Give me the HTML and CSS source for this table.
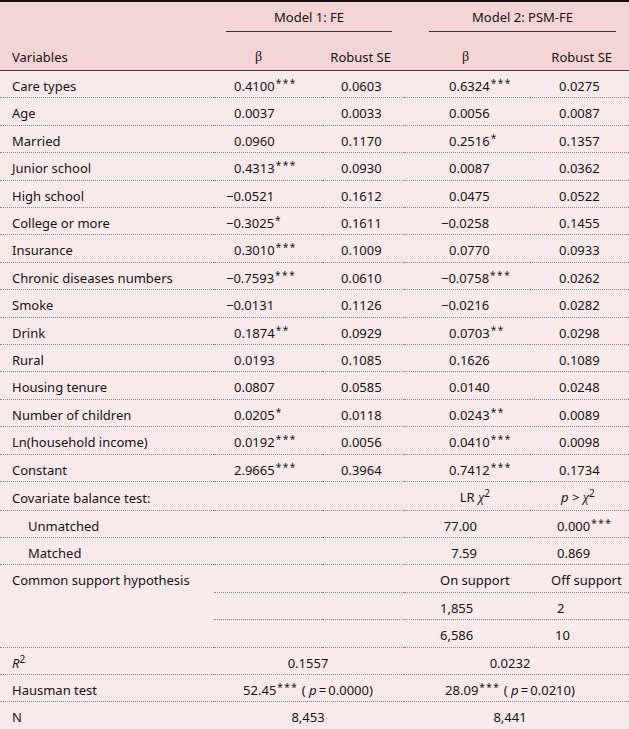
FILE: index.html
```html
<!DOCTYPE html>
<html>
<head>
<meta charset="utf-8">
<link rel="stylesheet" href="styles.css">
</head>
<body>
<table class="t">
  <colgroup>
    <col class="c1"><col class="c2"><col class="c3"><col class="c4"><col class="c5">
  </colgroup>
  <thead>
    <tr class="h1">
      <th></th>
      <th colspan="2"><div class="mh mh1">Model 1: FE</div></th>
      <th colspan="2"><div class="mh mh2">Model 2: PSM-FE</div></th>
    </tr>
    <tr class="h2">
      <th class="var">Variables</th>
      <th class="hb1"><span class="gr">β</span></th>
      <th class="hs1">Robust SE</th>
      <th class="hb2"><span class="gr">β</span></th>
      <th class="hs2">Robust SE</th>
    </tr>
  </thead>
  <tbody>
    <tr><td class="var">Care types</td><td class="b1">0.4100<sup>***</sup></td><td class="s1">0.0603</td><td class="b2">0.6324<sup>***</sup></td><td class="s2">0.0275</td></tr>
    <tr><td class="var">Age</td><td class="b1">0.0037</td><td class="s1">0.0033</td><td class="b2">0.0056</td><td class="s2">0.0087</td></tr>
    <tr><td class="var">Married</td><td class="b1">0.0960</td><td class="s1">0.1170</td><td class="b2">0.2516<sup>*</sup></td><td class="s2">0.1357</td></tr>
    <tr><td class="var">Junior school</td><td class="b1">0.4313<sup>***</sup></td><td class="s1">0.0930</td><td class="b2">0.0087</td><td class="s2">0.0362</td></tr>
    <tr><td class="var">High school</td><td class="b1 neg">−0.0521</td><td class="s1">0.1612</td><td class="b2">0.0475</td><td class="s2">0.0522</td></tr>
    <tr><td class="var">College or more</td><td class="b1 neg">−0.3025<sup>*</sup></td><td class="s1">0.1611</td><td class="b2 neg">−0.0258</td><td class="s2">0.1455</td></tr>
    <tr><td class="var">Insurance</td><td class="b1">0.3010<sup>***</sup></td><td class="s1">0.1009</td><td class="b2">0.0770</td><td class="s2">0.0933</td></tr>
    <tr><td class="var">Chronic diseases numbers</td><td class="b1 neg">−0.7593<sup>***</sup></td><td class="s1">0.0610</td><td class="b2 neg">−0.0758<sup>***</sup></td><td class="s2">0.0262</td></tr>
    <tr><td class="var">Smoke</td><td class="b1 neg">−0.0131</td><td class="s1">0.1126</td><td class="b2 neg">−0.0216</td><td class="s2">0.0282</td></tr>
    <tr><td class="var">Drink</td><td class="b1">0.1874<sup>**</sup></td><td class="s1">0.0929</td><td class="b2">0.0703<sup>**</sup></td><td class="s2">0.0298</td></tr>
    <tr><td class="var">Rural</td><td class="b1">0.0193</td><td class="s1">0.1085</td><td class="b2">0.1626</td><td class="s2">0.1089</td></tr>
    <tr><td class="var">Housing tenure</td><td class="b1">0.0807</td><td class="s1">0.0585</td><td class="b2">0.0140</td><td class="s2">0.0248</td></tr>
    <tr><td class="var">Number of children</td><td class="b1">0.0205<sup>*</sup></td><td class="s1">0.0118</td><td class="b2">0.0243<sup>**</sup></td><td class="s2">0.0089</td></tr>
    <tr><td class="var">Ln(household income)</td><td class="b1">0.0192<sup>***</sup></td><td class="s1">0.0056</td><td class="b2">0.0410<sup>***</sup></td><td class="s2">0.0098</td></tr>
    <tr><td class="var">Constant</td><td class="b1">2.9665<sup>***</sup></td><td class="s1">0.3964</td><td class="b2">0.7412<sup>***</sup></td><td class="s2">0.1734</td></tr>
    <tr><td class="var">Covariate balance test:</td><td></td><td></td><td class="lrh">LR <span class="chi">χ</span><sup class="sq">2</sup></td><td class="pxh"><i>p</i> &gt; <span class="chi">χ</span><sup class="sq">2</sup></td></tr>
    <tr><td class="var sub">Unmatched</td><td></td><td></td><td class="lr">77.00</td><td class="px">0.000<sup>***</sup></td></tr>
    <tr><td class="var sub">Matched</td><td></td><td></td><td class="lr">7.59</td><td class="px">0.869</td></tr>
    <tr><td class="var span3" rowspan="3">Common support hypothesis</td><td></td><td></td><td class="cs">On support</td><td class="off">Off support</td></tr>
    <tr><td></td><td></td><td class="cs">1,855</td><td class="off2">2</td></tr>
    <tr><td></td><td></td><td class="cs">6,586</td><td class="off3">10</td></tr>
    <tr><td class="var"><i>R</i><sup class="sq">2</sup></td><td colspan="2" class="m1c">0.1557</td><td colspan="2" class="m2c">0.0232</td></tr>
    <tr><td class="var">Hausman test</td><td colspan="2" class="m1c">52.45<sup>***</sup> ( <i>p</i>&#8201;=&#8201;0.0000)</td><td colspan="2" class="m2c">28.09<sup>***</sup> ( <i>p</i>&#8201;=&#8201;0.0210)</td></tr>
    <tr class="last"><td class="var">N</td><td colspan="2" class="m1c">8,453</td><td colspan="2" class="m2c">8,441</td></tr>
  </tbody>
</table>
</body>
</html>
```

FILE: styles.css
```css
html, body {
  margin: 0;
  padding: 0;
  background: #faeaea;
}

body {
  font-family: "Noto Sans", "Open Sans", sans-serif;
  font-size: 13px;
  color: #141414;
}

.t {
  width: 629px;
  table-layout: fixed;
  border-collapse: separate;
  border-spacing: 0;
  border-top: 2px solid #111;
  border-bottom: 2px solid #111;
}

.c1 { width: 214px; }
.c2 { width: 108px; }
.c3 { width: 82px; }
.c4 { width: 126px; }
.c5 { width: 99px; }

thead th {
  background: #f3d5d5;
  font-weight: normal;
  padding: 0;
}

.h1 th {
  padding-top: 6px;
}

.mh {
  line-height: 18px;
  padding-bottom: 5px;
  border-bottom: 1px solid #333;
  text-align: center;
}

.mh1 { margin: 0 12px; }
.mh2 { margin: 0 13px 0 25px; }

.h2 th {
  padding-top: 15px;
  padding-bottom: 4px;
  line-height: 18px;
  border-bottom: 1px solid #3a3a3a;
}

.h2 .var { text-align: left; padding-left: 12px; }
.hb1 { text-align: left; padding-left: 41px !important; }
.hs1 { text-align: right; padding-right: 13px !important; }
.hb2 { text-align: left; padding-left: 58px !important; }
.hs2 { text-align: right; padding-right: 17px !important; }

.gr, .chi {
  font-family: "Liberation Serif", "DejaVu Serif", serif;
  font-size: 14px;
}

.chi { font-style: italic; }

tbody td {
  background: #faeaea;
  padding: 6px 0 2px;
  line-height: 18.4px;
  border-bottom: 1px dotted #8c8c8c;
  white-space: nowrap;
  vertical-align: middle;
}

tbody tr.last td { border-bottom: none; }

td.var { padding-left: 12px; }
td.sub { padding-left: 28px; }
td.span3 { vertical-align: top; }

sup {
  font-size: 10px;
  line-height: 0;
  vertical-align: 4px;
  letter-spacing: 1.5px;
  padding-left: 1px;
}

sup.sq { font-size: 10px; letter-spacing: 0; padding-left: 0; vertical-align: 5px; }

.b1 { padding-left: 20px; }
.s1 { padding-left: 19px; }
.b2 { padding-left: 45px; }
.s2 { padding-left: 29px; }
.neg { text-indent: -8px; }

.lrh { text-align: right; padding-right: 40px; }
.pxh { padding-left: 31px; }
.lr { text-align: right; padding-right: 53px; }
.px { padding-left: 27px; }
.cs { padding-left: 36px; }
.off { padding-left: 21px; }
.off2 { padding-left: 27px; }
.off3 { padding-left: 25px; }

.m1c { text-align: center; padding-left: 0; padding-right: 2px; }
.m2c { text-align: center; padding-right: 13px; }
```
